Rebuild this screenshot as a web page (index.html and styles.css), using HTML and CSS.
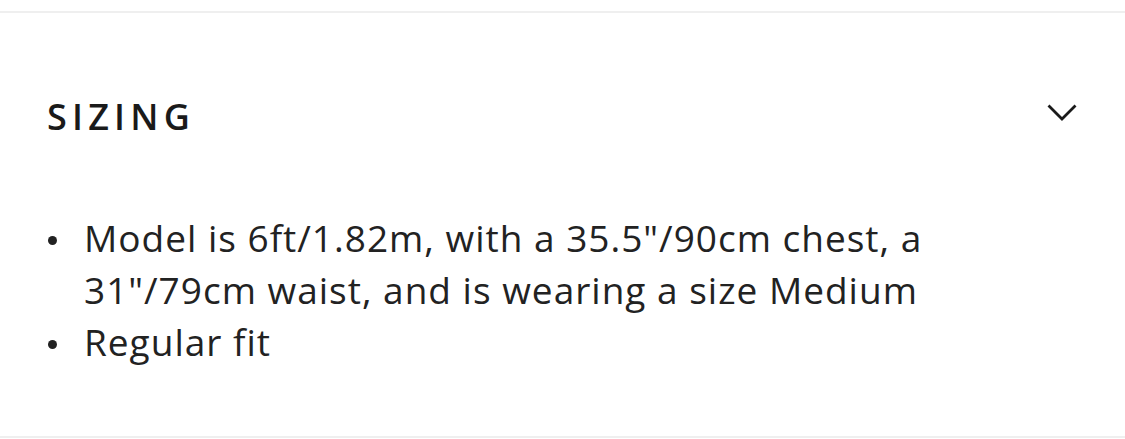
FILE: index.html
```html
<!DOCTYPE html>
<html>
<head>
<meta charset="utf-8">
<link rel="stylesheet" href="styles.css">
</head>
<body>
<section class="accordion">
  <div class="header">
    <h2 class="title">SIZING</h2>
    <svg class="chevron" width="30" height="18" viewBox="0 0 30 18"><path d="M1.5 1.5 L15 15 L28.5 1.5" fill="none" stroke="#1a1a1a" stroke-width="2.8"/></svg>
  </div>
  <ul class="list">
    <li>Model is 6ft/1.82m, with a 35.5"/90cm chest, a 31"/79cm waist, and is wearing a size Medium</li>
    <li>Regular fit</li>
  </ul>
</section>
</body>
</html>
```
FILE: styles.css
```css
html, body { margin: 0; padding: 0; background: #fff; }
body { font-family: "Open Sans", "Noto Sans", sans-serif; color: #222; }
.accordion {
  margin-top: 11px;
  border-top: 2px solid #efefef;
  border-bottom: 2px solid #efefef;
  height: 427px;
  box-sizing: border-box;
}
.header {
  display: flex;
  justify-content: space-between;
  padding: 0 48px 0 47px;
  height: 199px;
  align-items: flex-start;
}
.title {
  margin: 0;
  margin-top: 82px;
  font-size: 36px;
  font-weight: 600;
  letter-spacing: 5.2px;
  line-height: 44px;
  color: #1a1a1a;
}
.chevron { margin-top: 91px; }
.list {
  margin: 0;
  padding: 0 0 0 84px;
  width: 880px;
  list-style: none;
  font-size: 37px;
  line-height: 52px;
  letter-spacing: 1px;
}
.list li { position: relative; }
.list li::before {
  content: "";
  position: absolute;
  left: -36px;
  top: 24px;
  width: 9px;
  height: 9px;
  border-radius: 50%;
  background: #222;
}
```
